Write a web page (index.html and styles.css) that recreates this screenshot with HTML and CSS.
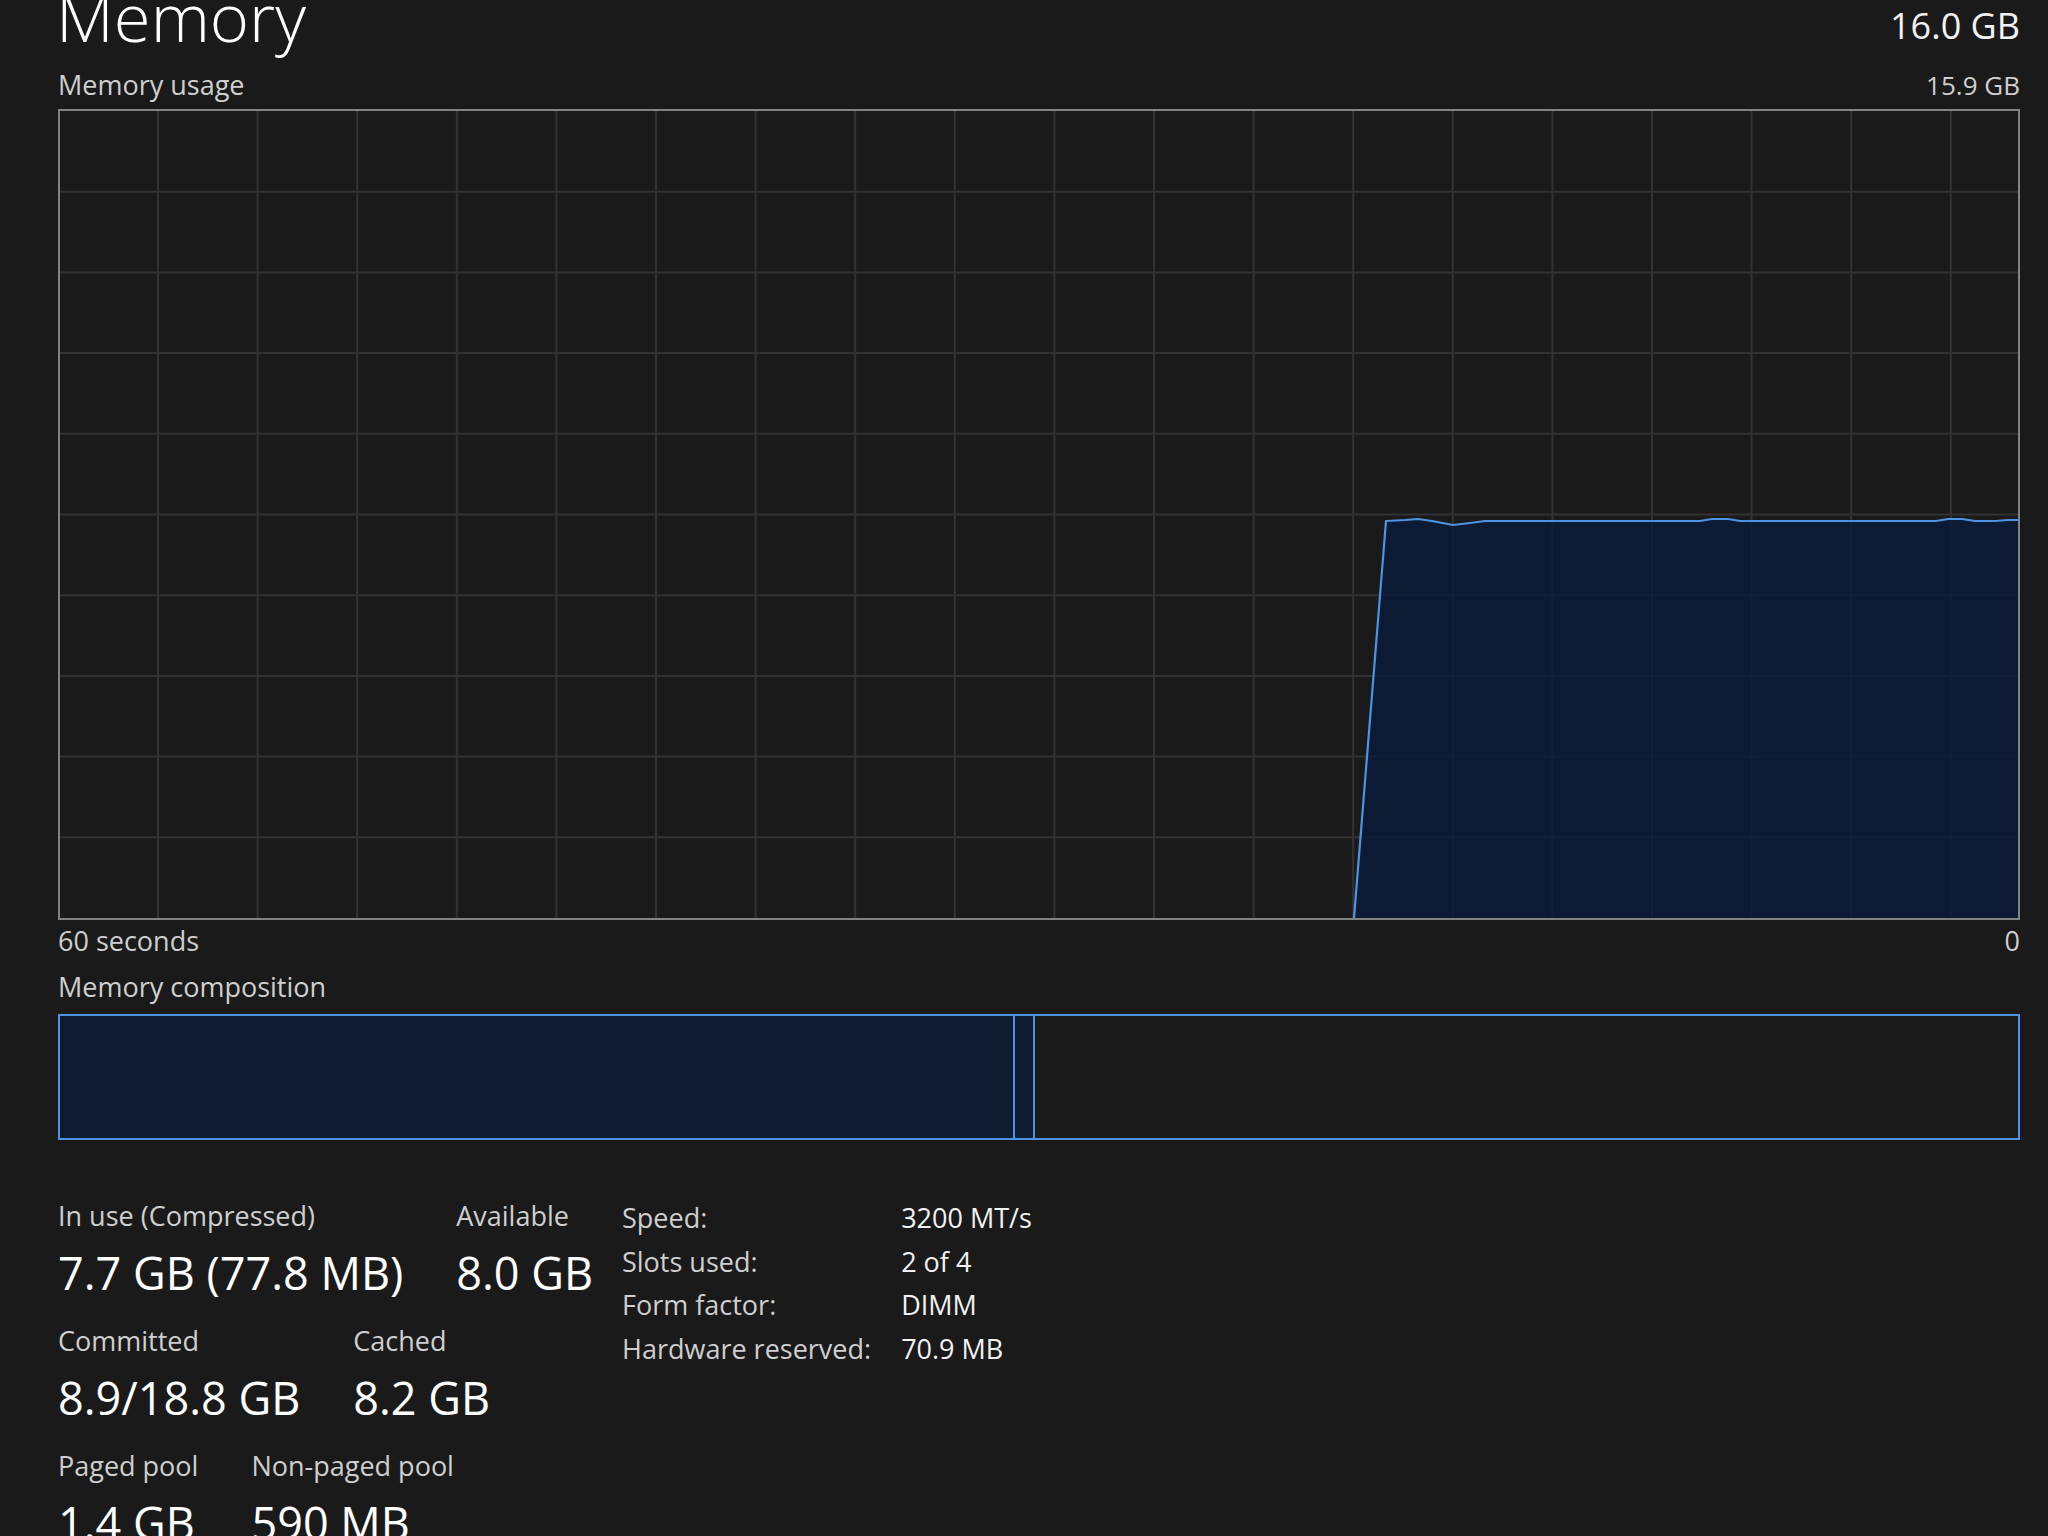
FILE: index.html
```html
<!DOCTYPE html>
<html lang="en">
<head>
<meta charset="utf-8">
<title>Memory</title>
<link rel="stylesheet" href="styles.css">
</head>
<body>
<main class="perf">
  <header class="head">
    <h1 class="title">Memory</h1>
    <span class="total">16.0 GB</span>
  </header>

  <div class="graph-caption">
    <span>Memory usage</span>
    <span>15.9 GB</span>
  </div>

  <div class="graph">
    <svg class="chart" viewBox="0 0 1958 807" preserveAspectRatio="none" aria-hidden="true">
      <g class="grid">
        <line x1="0" y1="80.7" x2="1958" y2="80.7"/>
        <line x1="0" y1="161.4" x2="1958" y2="161.4"/>
        <line x1="0" y1="242.1" x2="1958" y2="242.1"/>
        <line x1="0" y1="322.8" x2="1958" y2="322.8"/>
        <line x1="0" y1="403.5" x2="1958" y2="403.5"/>
        <line x1="0" y1="484.2" x2="1958" y2="484.2"/>
        <line x1="0" y1="564.9" x2="1958" y2="564.9"/>
        <line x1="0" y1="645.6" x2="1958" y2="645.6"/>
        <line x1="0" y1="726.3" x2="1958" y2="726.3"/>
        <line x1="98" y1="0" x2="98" y2="807"/>
        <line x1="197.6" y1="0" x2="197.6" y2="807"/>
        <line x1="297.2" y1="0" x2="297.2" y2="807"/>
        <line x1="396.8" y1="0" x2="396.8" y2="807"/>
        <line x1="496.4" y1="0" x2="496.4" y2="807"/>
        <line x1="596" y1="0" x2="596" y2="807"/>
        <line x1="695.6" y1="0" x2="695.6" y2="807"/>
        <line x1="795.2" y1="0" x2="795.2" y2="807"/>
        <line x1="894.8" y1="0" x2="894.8" y2="807"/>
        <line x1="994.4" y1="0" x2="994.4" y2="807"/>
        <line x1="1094" y1="0" x2="1094" y2="807"/>
        <line x1="1193.6" y1="0" x2="1193.6" y2="807"/>
        <line x1="1293.2" y1="0" x2="1293.2" y2="807"/>
        <line x1="1392.8" y1="0" x2="1392.8" y2="807"/>
        <line x1="1492.4" y1="0" x2="1492.4" y2="807"/>
        <line x1="1592" y1="0" x2="1592" y2="807"/>
        <line x1="1691.6" y1="0" x2="1691.6" y2="807"/>
        <line x1="1791.2" y1="0" x2="1791.2" y2="807"/>
        <line x1="1890.8" y1="0" x2="1890.8" y2="807"/>
      </g>
      <polygon class="area" points="1294,807 1326,410 1345,409 1358,408 1372,410 1393,414 1410,412 1425,410 1640,410 1652,408 1668,408 1680,410 1876,410 1888,408 1902,408 1915,410 1935,410 1948,409 1958,409 1958,807"/>
      <polyline class="trace" points="1294,807 1326,410 1345,409 1358,408 1372,410 1393,414 1410,412 1425,410 1640,410 1652,408 1668,408 1680,410 1876,410 1888,408 1902,408 1915,410 1935,410 1948,409 1958,409"/>
    </svg>
  </div>

  <div class="axis">
    <span>60 seconds</span>
    <span>0</span>
  </div>

  <div class="comp-caption">Memory composition</div>
  <div class="comp">
    <div class="seg seg-used" style="width: 48.77%"></div>
    <div class="seg seg-modified" style="width: 1.02%"></div>
    <div class="seg seg-rest"></div>
  </div>

  <section class="stats">
    <div class="groups">
      <div class="row">
        <div class="cell"><div class="label">In use (Compressed)</div><div class="value">7.7 GB (77.8 MB)</div></div>
        <div class="cell"><div class="label">Available</div><div class="value">8.0 GB</div></div>
      </div>
      <div class="row">
        <div class="cell"><div class="label">Committed</div><div class="value">8.9/18.8 GB</div></div>
        <div class="cell"><div class="label">Cached</div><div class="value">8.2 GB</div></div>
      </div>
      <div class="row">
        <div class="cell"><div class="label">Paged pool</div><div class="value">1.4 GB</div></div>
        <div class="cell"><div class="label">Non-paged pool</div><div class="value">590 MB</div></div>
      </div>
    </div>

    <dl class="specs">
      <dt>Speed:</dt><dd>3200 MT/s</dd>
      <dt>Slots used:</dt><dd>2 of 4</dd>
      <dt>Form factor:</dt><dd>DIMM</dd>
      <dt>Hardware reserved:</dt><dd>70.9 MB</dd>
    </dl>
  </section>
</main>
</body>
</html>
```

FILE: styles.css
```css
html, body {
  margin: 0;
  padding: 0;
  background: #1a1a1a;
  height: 100%;
  overflow: hidden;
}

body {
  font-family: "Open Sans", "Noto Sans", sans-serif;
  color: #ffffff;
}

.perf {
  padding: 0 28px 0 58px;
}

/* Page heading */
.head {
  display: flex;
  justify-content: space-between;
  align-items: flex-start;
  height: 68px;
}

.title {
  margin: 0 0 0 -2px;
  font-size: 67px;
  font-weight: 300;
  line-height: 32px;
  color: #ffffff;
}

.total {
  font-size: 36px;
  line-height: 52px;
  color: #f2f2f2;
}

/* Captions around the charts */
.graph-caption,
.axis {
  display: flex;
  justify-content: space-between;
  font-size: 27px;
  color: #cfcfcf;
}

.graph-caption {
  line-height: 34px;
}

.graph-caption span:last-child {
  font-size: 26px;
}

.axis {
  line-height: 42px;
}

.comp-caption {
  font-size: 27px;
  line-height: 50px;
  color: #cfcfcf;
}

/* Usage chart */
.graph {
  margin-top: 7px;
  height: 807px;
  border: 2px solid #838383;
  background: #1a1a1a;
}

.chart {
  display: block;
  width: 100%;
  height: 100%;
}

.grid line {
  stroke: #323232;
  stroke-width: 2;
}

.area {
  fill: rgba(9, 27, 58, 0.8);
}

.trace {
  fill: none;
  stroke: #4f93e4;
  stroke-width: 2.2;
  stroke-linejoin: round;
}

/* Composition bar */
.comp {
  margin-top: 2px;
  height: 122px;
  border: 2px solid #4f93e4;
  display: flex;
}

.seg {
  height: 100%;
  box-sizing: border-box;
}

.seg-used,
.seg-modified {
  background: #0e1b31;
  border-right: 2px solid #4f93e4;
}

.seg-rest {
  flex: 1;
}

/* Figures below the charts */
.stats {
  display: flex;
  align-items: flex-start;
  gap: 29px;
  margin-top: 56px;
}

.groups {
  display: flex;
  flex-direction: column;
  gap: 29px;
  margin-top: 7px;
}

.row {
  display: flex;
  gap: 53px;
}

.label {
  font-size: 27px;
  line-height: 26px;
  color: #cfcfcf;
  white-space: nowrap;
}

.value {
  margin-top: 18px;
  font-size: 45px;
  line-height: 52px;
  color: #ffffff;
  white-space: nowrap;
}

.specs {
  display: grid;
  grid-template-columns: auto auto;
  column-gap: 30px;
  margin: 0;
  font-size: 27px;
  line-height: 43.5px;
}

.specs dt {
  color: #cfcfcf;
  white-space: nowrap;
}

.specs dd {
  margin: 0;
  color: #f2f2f2;
  white-space: nowrap;
}
```
